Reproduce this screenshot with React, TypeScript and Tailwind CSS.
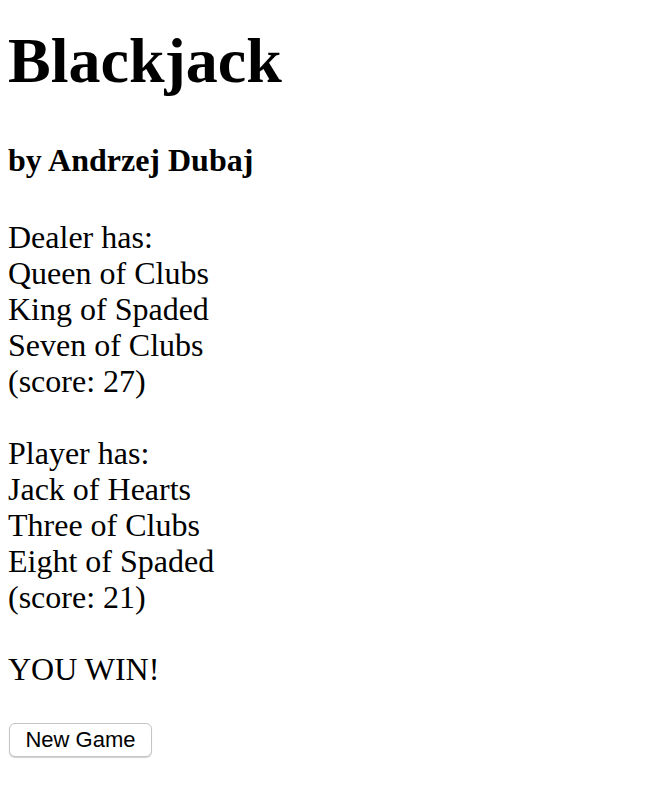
import React from "react";

export default function App() {
  const lines = [
    "Dealer has:",
    "Queen of Clubs",
    "King of Spaded",
    "Seven of Clubs",
    "(score: 27)",
    "",
    "Player has:",
    "Jack of Hearts",
    "Three of Clubs",
    "Eight of Spaded",
    "(score: 21)",
    "",
    "YOU WIN!",
  ];
  return (
    <div className="bg-white text-black px-[8px] pt-[8px] pb-[40px] font-['Liberation_Serif',serif]">
      <h1 className="mt-[21px] text-[64px] leading-[64px] font-bold">Blackjack</h1>
      <h4 className="mt-[49px] text-[32px] leading-[36px] font-bold">by Andrzej Dubaj</h4>
      <div className="mt-[41px] text-[32px] leading-[36px]">
        {lines.map((l, i) => (
          <div key={i} className="h-[36px] whitespace-pre">
            {l}
          </div>
        ))}
      </div>
      <button className="mt-[36px] ml-[1px] w-[143px] h-[34px] rounded-[6px] border border-[#c4c4c4] bg-white shadow-[0_1px_1px_rgba(0,0,0,0.18)] font-['Liberation_Sans',Arial,sans-serif] text-[22px] leading-[32px] text-black flex items-center justify-center">
        New Game
      </button>
    </div>
  );
}
